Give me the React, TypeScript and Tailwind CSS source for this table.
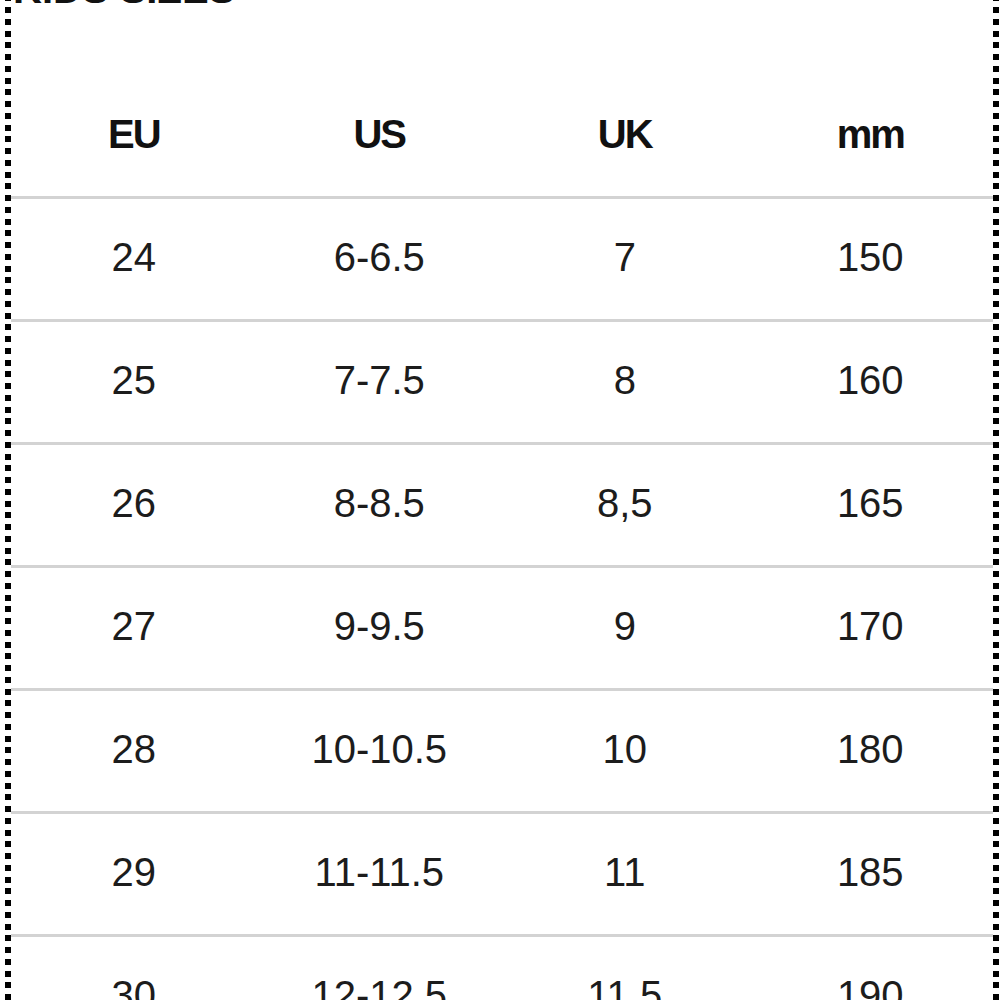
const headers = ["EU", "US", "UK", "mm"];

const rows = [
  ["24", "6-6.5", "7", "150"],
  ["25", "7-7.5", "8", "160"],
  ["26", "8-8.5", "8,5", "165"],
  ["27", "9-9.5", "9", "170"],
  ["28", "10-10.5", "10", "180"],
  ["29", "11-11.5", "11", "185"],
  ["30", "12-12.5", "11,5", "190"],
];

// dotted edge of the card, drawn as a repeating stripe
const DottedEdge = () => (
  <div className="w-[6px] shrink-0 bg-[repeating-linear-gradient(to_bottom,#000_0px,#000_1.25px,transparent_1.25px,transparent_7px,#000_7px,#000_11.75px)]" />
);

const App = () => {
  return (
    <div
      className="bg-white h-[1000px] w-[1000px] overflow-hidden flex pl-[5px]"
      style={{ fontFamily: "'Liberation Sans', Arial, sans-serif" }}
    >
      <DottedEdge />

      <div className="w-[982px] shrink-0 flex flex-col">
        {/* Title, mostly scrolled out of view */}
        <div className="h-[76px] shrink-0 pl-[2px]">
          <p className="-mt-[31px] text-[40px] leading-[40px] font-bold text-[#111]">
            KIDS SIZES
          </p>
        </div>

        {/* Header row */}
        <div className="h-[123px] shrink-0 grid grid-cols-4 items-center pb-[5px] border-b-[3px] border-[#d3d3d3]">
          {headers.map((h) => (
            <p key={h} className="text-center text-[40px] leading-[40px] font-bold text-[#111] tracking-[-2px]">
              {h}
            </p>
          ))}
        </div>

        {/* Size rows */}
        {rows.map((row, index) => (
          <div
            key={index}
            className="h-[123px] shrink-0 grid grid-cols-4 items-center pb-[5px] border-b-[3px] border-[#d3d3d3]"
          >
            {row.map((cell, i) => (
              <p key={i} className="text-center text-[40px] leading-[40px] text-[#1c1c1c]">
                {cell}
              </p>
            ))}
          </div>
        ))}
      </div>

      <DottedEdge />
    </div>
  );
};

export default App;
